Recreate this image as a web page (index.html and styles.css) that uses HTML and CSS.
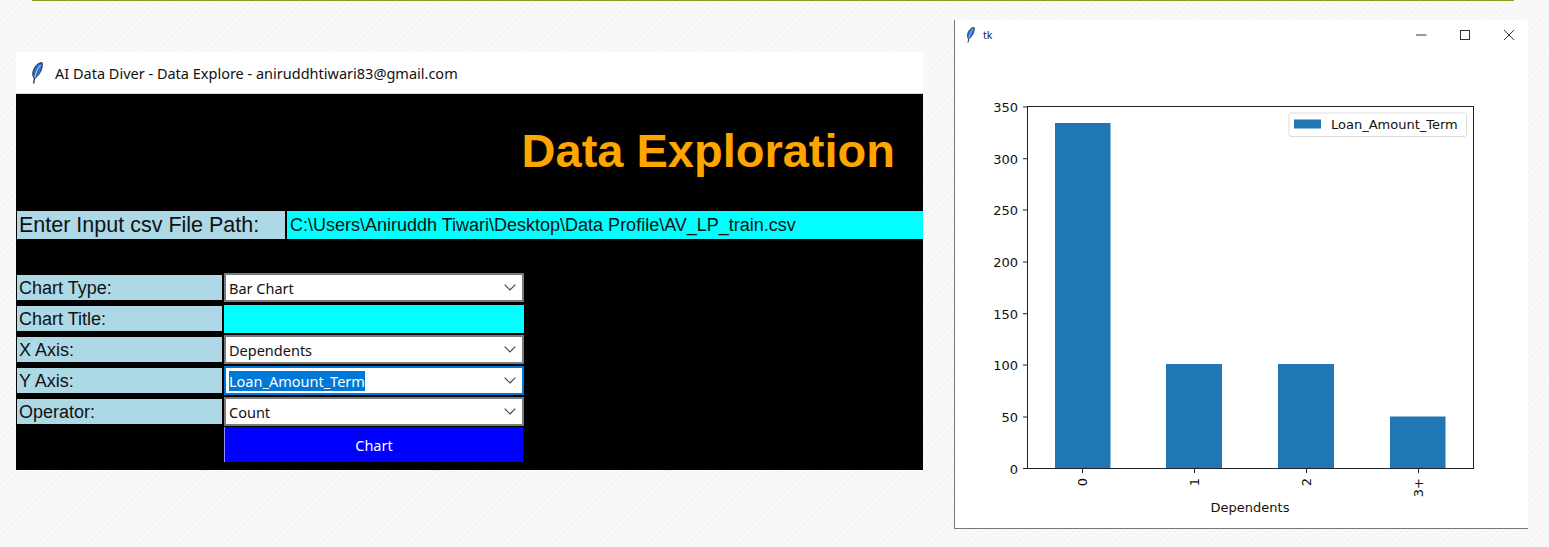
FILE: index.html
```html
<!DOCTYPE html>
<html lang="en">
<head>
  <meta charset="UTF-8">
  <title>AI Data Diver - Data Explore</title>
  <link rel="stylesheet" href="styles.css">
</head>
<body>

  <div class="topLine"></div>

  <!-- hidden defs shared by both windows -->
  <svg class="defs" width="0" height="0">
    <symbol id="feather" viewBox="0 0 12 22">
      <path d="M2.6 21.5 L3.6 15.5" fill="none" stroke="#222" stroke-width="1.3"/>
      <path d="M3.4 16.5 C0.4 13.5 1.6 7 6 2.6 C7.8 1 10 0.4 11.2 0.8 C11.8 4 10.6 8.6 8.4 11.6 C7 13.6 5.4 15.6 3.4 16.5 Z" fill="#2f6fd0" stroke="#2a3038" stroke-width="1"/>
      <path d="M3.8 15.5 C4.6 11 6.4 6.6 9.6 3" fill="none" stroke="#b9d4f5" stroke-width="1"/>
    </symbol>
    <symbol id="chevron" viewBox="0 0 12 7">
      <path d="M0.7 0.7 L6 6 L11.3 0.7" fill="none" stroke="#444" stroke-width="1.2"/>
    </symbol>
  </svg>

  <!-- main tk window -->
  <section class="window mainWin">
    <header class="titleBar">
      <svg class="quill" width="12" height="22"><use href="#feather"/></svg>
      <span>AI Data Diver - Data Explore - aniruddhtiwari83@gmail.com</span>
    </header>
    <div class="panel">
      <h1 class="heading">Data Exploration</h1>

      <div class="pathRow">
        <div class="pathLabel">Enter Input csv File Path:</div>
        <div class="pathEntry">C:\Users\Aniruddh Tiwari\Desktop\Data Profile\AV_LP_train.csv</div>
      </div>

      <div class="form">
        <div class="label">Chart Type:</div>
        <div class="combo"><span>Bar Chart</span><svg width="12" height="7"><use href="#chevron"/></svg></div>

        <div class="label">Chart Title:</div>
        <div class="entry"></div>

        <div class="label">X Axis:</div>
        <div class="combo"><span>Dependents</span><svg width="12" height="7"><use href="#chevron"/></svg></div>

        <div class="label">Y Axis:</div>
        <div class="combo focused"><span class="selected">Loan_Amount_Term</span><svg width="12" height="7"><use href="#chevron"/></svg></div>

        <div class="label">Operator:</div>
        <div class="combo"><span>Count</span><svg width="12" height="7"><use href="#chevron"/></svg></div>

        <button class="chartBtn" type="button">Chart</button>
      </div>
    </div>
  </section>

  <!-- matplotlib window -->
  <section class="window plotWin">
    <header class="plotBar">
      <svg class="quillSmall" width="9" height="16"><use href="#feather"/></svg>
      <span class="plotName">tk</span>
      <svg class="winBtns" width="98" height="10" viewBox="0 0 98 10">
        <path d="M0 5 H10.500" stroke="#555" stroke-width="1.200"/>
        <rect x="44.500" y="0.500" width="9" height="9" fill="none" stroke="#333" stroke-width="1"/>
        <path d="M88 0 L98 10 M98 0 L88 10" stroke="#333" stroke-width="1"/>
      </svg>
    </header>

    <!-- viewBox uses page coordinates so numbers read straight off the screenshot -->
    <svg class="plot" width="573" height="478" viewBox="955 50 573 478">
      <g class="bars">
        <rect x="1055" y="123" width="55.500" height="345.500"/>
        <rect x="1166" y="364" width="56" height="104.500"/>
        <rect x="1278" y="364" width="56" height="104.500"/>
        <rect x="1390" y="416.500" width="55.500" height="52"/>
      </g>
      <rect class="frame" x="1027.500" y="106.500" width="446" height="362"/>
      <g class="ticks">
        <path d="M1023 107H1027M1023 158.700H1027M1023 210H1027M1023 262H1027M1023 313.700H1027M1023 365H1027M1023 417H1027M1023 468.500H1027"/>
        <path d="M1082.500 469V473M1194.500 469V473M1306.500 469V473M1418.500 469V473"/>
      </g>
      <g class="yLabels">
        <text x="1018" y="112">350</text>
        <text x="1018" y="163.700">300</text>
        <text x="1018" y="215">250</text>
        <text x="1018" y="267">200</text>
        <text x="1018" y="318.700">150</text>
        <text x="1018" y="370">100</text>
        <text x="1018" y="422">50</text>
        <text x="1018" y="473.500">0</text>
      </g>
      <g class="xLabels">
        <text transform="translate(1087 478) rotate(-90)">0</text>
        <text transform="translate(1199 478) rotate(-90)">1</text>
        <text transform="translate(1311 478) rotate(-90)">2</text>
        <text transform="translate(1423 478) rotate(-90)">3+</text>
      </g>
      <text class="xTitle" x="1250" y="512">Dependents</text>
      <rect class="legendBox" x="1289" y="113" width="177.500" height="23.500" rx="2"/>
      <rect class="legendKey" x="1294" y="119.500" width="27" height="9"/>
      <text class="legendText" x="1331" y="129">Loan_Amount_Term</text>
    </svg>
  </section>

</body>
</html>
```

FILE: styles.css
```css
html, body {
  margin: 0;
  height: 100%;
}
body {
  position: relative;
  overflow: hidden;
  background: repeating-linear-gradient(135deg, #fafafa 0 2px, #f5f5f5 2px 4px);
}
.topLine {
  margin: 0 35px 0 32px;
  height: 1px;
  background-color: #8a9e1f;
}
.defs {
  position: absolute;
}

/* windows sit on the desktop at their own place */
.window {
  position: absolute;
  box-sizing: border-box;
  background-color: #fff;
}
.mainWin {
  left: 16px;
  top: 52px;
  width: 907px;
  height: 418px;
}
.plotWin {
  left: 954px;
  top: 20px;
  width: 574px;
  height: 509px;
  border-left: 1px solid #777;
  border-bottom: 1px solid #777;
}

.titleBar {
  display: flex;
  align-items: center;
  gap: 12px;
  box-sizing: border-box;
  height: 42px;
  padding-left: 15px;
  border-bottom: 1px solid #ddd;
  font-family: "Noto Sans", sans-serif;
  font-size: 14.500px;
  color: #111;
}
.quill {
  flex: none;
}

.panel {
  height: 376px;
  background-color: #000;
}
.heading {
  margin: 0;
  box-sizing: border-box;
  height: 117px;
  padding: 30px 28px 0 0;
  text-align: right;
  font-family: "Liberation Sans", sans-serif;
  font-size: 47px;
  line-height: 54px;
  color: #ffa500;
}

.pathRow {
  display: flex;
  gap: 2px;
  height: 28px;
  padding-left: 1px;
  font-family: "Liberation Sans", sans-serif;
  color: #111;
}
.pathLabel {
  width: 268px;
  padding-left: 2px;
  box-sizing: border-box;
  background-color: #add8e6;
  font-size: 21.500px;
  line-height: 29px;
}
.pathEntry {
  flex: 1;
  padding-left: 3px;
  background-color: #0ff;
  font-size: 18px;
  line-height: 28px;
}

.form {
  display: grid;
  grid-template-columns: 205px 300px;
  grid-auto-rows: 29px;
  column-gap: 2px;
  row-gap: 2px;
  margin-top: 34px;
  padding-left: 1px;
}
.label {
  align-self: center;
  height: 25px;
  padding-left: 2px;
  background-color: #add8e6;
  font-family: "Liberation Sans", sans-serif;
  font-size: 18px;
  line-height: 26px;
  color: #111;
}
.combo {
  display: flex;
  align-items: center;
  justify-content: space-between;
  box-sizing: border-box;
  padding: 0 6px 0 3px;
  border: 2px solid #7a7a7a;
  background-color: #fff;
  font-family: "Noto Sans", sans-serif;
  font-size: 14.500px;
  color: #111;
}
.focused {
  border-color: #0078d7;
}
.selected {
  background-color: #0078d7;
  color: #fff;
}
.entry {
  align-self: center;
  height: 28px;
  background-color: #0ff;
}
.chartBtn {
  grid-column: 2;
  height: 35px;
  margin-top: -1px;
  width: 299px;
  padding: 0;
  border: 0;
  border-left: 1px solid #8f8fff;
  background-color: #00f;
  font-family: "Noto Sans", sans-serif;
  font-size: 14.500px;
  color: #fff;
}

.plotBar {
  display: flex;
  align-items: center;
  height: 30px;
  padding: 0 14px 0 11px;
}
.quillSmall {
  flex: none;
}
.plotName {
  margin-left: 8px;
  font-family: "Noto Sans", sans-serif;
  font-size: 10.500px;
  color: #1a1a3a;
}
.winBtns {
  margin-left: auto;
}
.plot {
  display: block;
}

.bars rect, .legendKey {
  fill: #1f77b4;
}
.frame {
  fill: none;
  stroke: #222;
  stroke-width: 1;
}
.ticks path {
  stroke: #222;
  stroke-width: 1;
  fill: none;
}
.plot text {
  font-family: "DejaVu Sans", sans-serif;
  font-size: 13px;
  fill: #111;
}
.yLabels text {
  text-anchor: end;
}
.xLabels text {
  text-anchor: end;
}
.plot .xTitle {
  text-anchor: middle;
}
.legendBox {
  fill: #fff;
  stroke: #ddd;
  stroke-width: 1;
}
```
